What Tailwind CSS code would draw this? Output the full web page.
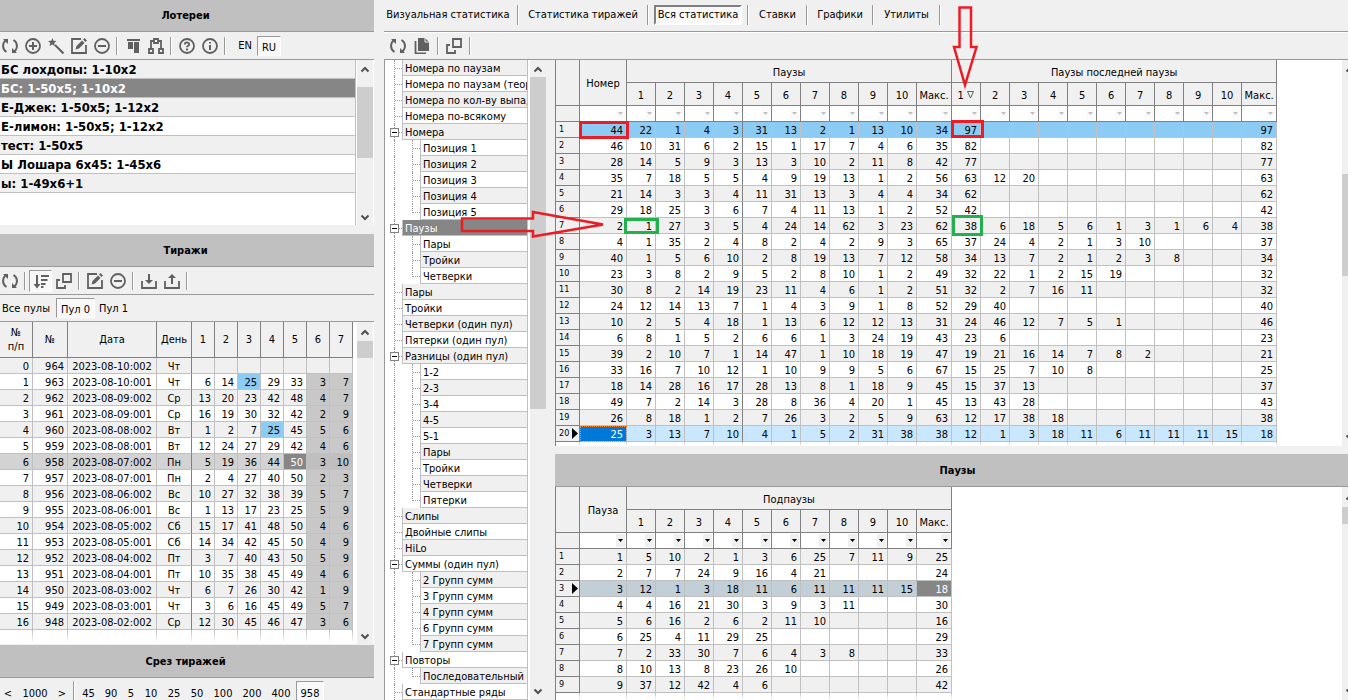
<!DOCTYPE html>
<html lang="ru">
<head>
  <meta charset="UTF-8" />
  <meta name="viewport" content="width=device-width, initial-scale=1.0" />
  <title>Статистика лотерей</title>
  <script src="https://cdn.jsdelivr.net/npm/@tailwindcss/browser@4"></script>
</head>
<body class="relative flex h-screen overflow-hidden bg-[#f0f0f0] font-['DejaVu_Sans_Condensed','Noto_Sans',sans-serif] text-[11px] leading-[15px] text-black">

  <!-- Icons -->
  <svg class="hidden" xmlns="http://www.w3.org/2000/svg">
    <symbol id="i-refresh" viewBox="0 0 16 16"><path d="M5 1.700A7 7 0 0 0 4.500 14M11 14.300A7 7 0 0 0 11.500 2" fill="none" stroke="#606060" stroke-width="2"/><path d="M1 1h5v5zM15 15h-5v-5z" fill="#606060"/></symbol>
    <symbol id="i-plus" viewBox="0 0 16 16"><circle cx="8" cy="8" r="7" fill="none" stroke="#606060" stroke-width="1.800"/><path d="M8 4v8M4 8h8" stroke="#606060" stroke-width="2"/></symbol>
    <symbol id="i-minus" viewBox="0 0 16 16"><circle cx="8" cy="8" r="7" fill="none" stroke="#606060" stroke-width="1.800"/><path d="M4 8h8" stroke="#606060" stroke-width="2"/></symbol>
    <symbol id="i-wand" viewBox="0 0 16 16"><path d="M7 7l8.500 8.500" stroke="#606060" stroke-width="2"/><path d="M4.500 0l1 2.800L8.500 3 6.200 5l.6 3-2.600-1.600L1.500 8l.8-3L0 3l3.300-.2z" fill="#606060"/></symbol>
    <symbol id="i-edit" viewBox="0 0 16 16"><path d="M10 1H1v14h14V7" fill="none" stroke="#606060" stroke-width="1.800"/><path d="M4.500 11.500l1-3.500 5.500-5.500 2.500 2.500L8 10.500zM12 1.500L13.500 0 16 2.500 14.500 4z" fill="#606060"/></symbol>
    <symbol id="i-columns" viewBox="0 0 16 16"><path d="M2 1h13v2H2zM3 4h5v7H3zM9 4h5v11H9z" fill="#606060"/></symbol>
    <symbol id="i-tree" viewBox="0 0 16 16"><g fill="none" stroke="#606060" stroke-width="1.800"><path d="M6 1h4v4H6zM1 11h4v4H1zM11 11h4v4h-4zM6 3H3v8M10 3h3v8"/></g></symbol>
    <symbol id="i-help" viewBox="0 0 16 16"><circle cx="8" cy="8" r="7" fill="none" stroke="#606060" stroke-width="1.800"/><path d="M5.800 6.500C5.800 3.700 10.300 3.900 10.200 6.300 10.200 7.800 8 7.700 8 9.300" fill="none" stroke="#606060" stroke-width="1.800"/><path d="M7 10.500h2v2H7z" fill="#606060"/></symbol>
    <symbol id="i-info" viewBox="0 0 16 16"><circle cx="8" cy="8" r="7" fill="none" stroke="#606060" stroke-width="1.800"/><path d="M7 4h2v1.600H7zM7 7h2v5H7z" fill="#606060"/></symbol>
    <symbol id="i-sort" viewBox="0 0 16 16"><path d="M3 2h2v9h2.500L4 15.500.5 11H3zM8 2h8v2H8zM8 6h6.500v2H8zM8 10h4.500v2H8zM8 13h2.500v2H8z" fill="#606060"/></symbol>
    <symbol id="i-windows" viewBox="0 0 16 16"><path d="M7 1h8v8H7z" fill="none" stroke="#606060" stroke-width="1.800"/><path d="M4 7H1v8h8v-3" fill="none" stroke="#606060" stroke-width="1.800"/></symbol>
    <symbol id="i-download" viewBox="0 0 16 16"><path d="M1 8v7h14V8" fill="none" stroke="#606060" stroke-width="1.800"/><path d="M7 1h2v6h3l-4 4-4-4h3z" fill="#606060"/></symbol>
    <symbol id="i-upload" viewBox="0 0 16 16"><path d="M1 8v7h14V8" fill="none" stroke="#606060" stroke-width="1.800"/><path d="M7 11h2V5h3L8 1 4 5h3z" fill="#606060"/></symbol>
    <symbol id="i-copy" viewBox="0 0 16 16"><path d="M4 0h7l4 4v9H4z" fill="#606060"/><path d="M11 0v4h4" fill="none" stroke="#f0f0f0"/><path d="M1.500 3v12.500H12" fill="none" stroke="#606060" stroke-width="1.800"/></symbol>
    <symbol id="i-up" viewBox="0 0 16 16"><path d="M4.500 10.500L8 7l3.500 3.500" fill="none" stroke="#505050" stroke-width="2"/></symbol>
    <symbol id="i-down" viewBox="0 0 16 16"><path d="M4.500 6.500L8 10l3.500-3.500" fill="none" stroke="#505050" stroke-width="2"/></symbol>
  </svg>

  <!-- Left column -->
  <aside class="flex w-[374px] shrink-0 flex-col">
    <h2 class="flex h-8 shrink-0 items-center justify-center border-b border-[#999] bg-[#c0c0c0] pr-[3px] font-bold">Лотереи</h2>
    <div class="-ml-0.5 flex h-7 shrink-0 items-center border-b border-[#999]" data-toolbar="refresh plus wand edit minus | columns tree | help info |">
      <button class="ml-1 h-5 w-6">EN</button>
      <button class="h-5 w-6 border border-[#999] border-r-white border-b-white bg-[#f8f8f8] pt-[3px]">RU</button>
    </div>
    <div class="flex shrink-0 border-r border-white bg-white">
      <ul id="lotteries" class="flex-1 border-r border-[#c0c0c0] pb-8 text-[13px] leading-5 font-bold"></ul>
      <div class="ml-px flex w-4 flex-col bg-[#f0f0f0]">
        <button class="flex h-[27px] items-start pt-px" aria-label="Вверх"><svg class="size-4"><use href="#i-up"/></svg></button>
        <div class="h-[71px] bg-[#cdcdcd]"></div>
        <button class="mt-auto h-4" aria-label="Вниз"><svg class="size-4"><use href="#i-down"/></svg></button>
      </div>
    </div>

    <h2 class="mt-[9px] flex h-[33px] shrink-0 items-center justify-center border-b border-[#999] bg-[#c0c0c0] pr-[3px] font-bold">Тиражи</h2>
    <div class="-ml-0.5 flex h-7 shrink-0 items-center border-b border-[#999]" data-toolbar="refresh | sort* windows | edit minus | download upload |"></div>
    <div class="flex h-[27px] shrink-0 items-center border-b border-[#999]">
      <button class="h-5 w-[52px]">Все пулы</button>
      <button class="ml-1 h-5 w-[39px] border border-[#999] border-r-white border-b-white bg-[#f8f8f8] pt-0.5">Пул 0</button>
      <button class="h-5 w-[37px]">Пул 1</button>
    </div>
    <div class="flex min-h-0 flex-1 overflow-hidden border-r border-white bg-white">
      <div class="flex-1 overflow-hidden">
        <table id="draws" class="w-[353px] table-fixed border-separate border-spacing-0"></table>
      </div>
      <div class="flex w-4 flex-col bg-[#f0f0f0]">
        <button class="h-[19px]" aria-label="Вверх"><svg class="size-4"><use href="#i-up"/></svg></button>
        <div class="h-[17px] bg-[#cdcdcd]"></div>
        <button class="mt-auto h-4" aria-label="Вниз"><svg class="size-4"><use href="#i-down"/></svg></button>
      </div>
    </div>

    <h2 class="mt-px flex h-[33px] shrink-0 items-center justify-center border-b border-[#999] bg-[#c0c0c0] pr-[3px] font-bold">Срез тиражей</h2>
    <div class="flex h-[22px] shrink-0 gap-px overflow-hidden pt-[3px]">
      <button class="h-6 w-4">&lt;</button>
      <button class="h-6 w-9">1000</button>
      <button class="h-6 w-4">&gt;</button>
      <i class="mx-0.5 h-6 w-0.5 border-l border-[#999] bg-white"></i>
      <button class="h-6 w-[21px]">45</button>
      <button class="h-6 w-[22px]">90</button>
      <button class="h-6 w-4">5</button>
      <button class="h-6 w-[22px]">10</button>
      <button class="h-6 w-[22px]">25</button>
      <button class="h-6 w-[22px]">50</button>
      <button class="h-6 w-7">100</button>
      <button class="h-6 w-7">200</button>
      <button class="h-6 w-7">400</button>
      <button class="h-6 w-7 border border-[#999] border-r-white bg-[#f8f8f8] pt-px">958</button>
    </div>
  </aside>

  <!-- Statistics -->
  <main class="ml-2.5 flex min-w-0 flex-1 flex-col">
    <nav class="flex h-8 shrink-0 items-center border-b border-[#999] pb-0.5 whitespace-nowrap">
      <button class="h-5 w-32">Визуальная статистика</button>
      <i class="mx-[5px] h-5 w-0.5 border-l border-[#999] bg-white"></i>
      <button class="h-5 w-[118px]">Статистика тиражей</button>
      <i class="mx-[5px] h-5 w-0.5 border-l border-[#999] bg-white"></i>
      <button class="h-5 w-[88px] border-2 border-[#808080] border-r-white border-b-white bg-[#f8f8f8]">Вся статистика</button>
      <i class="mx-[5px] h-5 w-0.5 border-l border-[#999] bg-white"></i>
      <button class="h-5 w-[47px]">Ставки</button>
      <i class="mx-[5px] h-5 w-0.5 border-l border-[#999] bg-white"></i>
      <button class="h-5 w-[54px]">Графики</button>
      <i class="mx-[5px] h-5 w-0.5 border-l border-[#999] bg-white"></i>
      <button class="h-5 w-[55px]">Утилиты</button>
      <i class="mx-[5px] h-5 w-0.5 border-l border-[#999] bg-white"></i>
    </nav>
    <div class="flex h-7 shrink-0 items-center border-t border-b border-t-white border-b-[#999] pl-0.5" data-toolbar="refresh copy | windows |"></div>

    <div class="flex min-h-0 flex-1">
      <div class="flex w-[162px] shrink-0 overflow-hidden border-l border-[#999] bg-white">
        <ul id="tree" class="w-[143px] overflow-hidden whitespace-nowrap"></ul>
        <div class="ml-0.5 flex w-4 flex-col bg-[#f0f0f0]">
          <button class="h-[17px]" aria-label="Вверх"><svg class="size-4"><use href="#i-up"/></svg></button>
          <div class="h-[332px] bg-[#cdcdcd]"></div>
          <button class="mt-auto h-[18px]" aria-label="Вниз"><svg class="size-4"><use href="#i-down"/></svg></button>
        </div>
      </div>

      <div class="-mr-3 ml-[9px] flex min-w-0 flex-1 flex-col">
        <div class="flex shrink-0 border-l border-[#808080] bg-white pr-0.5">
          <div class="min-w-0 flex-1">
            <table id="pauses" class="w-[721px] table-fixed border-separate border-spacing-0"></table>
          </div>
          <div class="flex w-4 flex-col bg-[#f0f0f0]">
            <button class="flex h-[114px] items-start pt-px" aria-label="Вверх"><svg class="size-4"><use href="#i-up"/></svg></button>
            <div class="h-[102px] bg-[#cdcdcd]"></div>
            <button class="mt-auto h-[18px]" aria-label="Вниз"><svg class="size-4"><use href="#i-down"/></svg></button>
          </div>
        </div>
        <h2 class="mt-2 flex h-[33px] shrink-0 items-center justify-center border-b border-[#999] bg-[#c0c0c0] font-bold">Паузы</h2>
        <div class="flex min-h-0 flex-1 overflow-hidden border-l border-[#808080] bg-white pr-0.5">
          <div class="min-w-0 flex-1">
            <table id="subpauses" class="w-[396px] table-fixed border-separate border-spacing-0"></table>
          </div>
          <div class="flex w-4 flex-col bg-[#f0f0f0]">
            <button class="h-5" aria-label="Вверх"><svg class="size-4"><use href="#i-up"/></svg></button>
            <div class="h-[17px] bg-[#cdcdcd]"></div>
            <button class="mt-auto h-[18px]" aria-label="Вниз"><svg class="size-4"><use href="#i-down"/></svg></button>
          </div>
        </div>
      </div>
    </div>
  </main>

  <!-- Marks drawn over the tables -->
  <svg class="pointer-events-none absolute top-0 left-0" width="1000" height="250" fill="none" stroke-width="3">
    <g stroke="#ed1c24">
      <rect x="580.500" y="122.500" width="47" height="15"/>
      <rect x="952.500" y="121.500" width="30" height="15"/>
      <path stroke-width="2.500" d="M462 218.500h71v-6.500l70 12.500-70 12v-5.500h-71z"/>
      <path stroke-width="2.500" d="M959.500 7.500h11.500v39.500h5.500L965 85 954 47h5.500z"/>
    </g>
    <g stroke="#22b14c">
      <rect x="625.500" y="219.500" width="32" height="13"/>
      <rect x="953.500" y="216.500" width="28" height="18"/>
    </g>
  </svg>

  <script>
    const lotteries = ['БС лохдопы: 1-10x2', 'БС: 1-50x5; 1-10x2', 'Е-Джек: 1-50x5; 1-12x2', 'Е-лимон: 1-50x5; 1-12x2', 'тест: 1-50x5', 'Ы Лошара 6x45: 1-45x6', 'ы: 1-49x6+1'];

    const draws = [
      '964 2023-08-10:002 Чт',
      '963 2023-08-10:001 Чт 6 14 25 29 33 3 7',
      '962 2023-08-09:002 Ср 13 20 23 42 48 4 7',
      '961 2023-08-09:001 Ср 16 19 30 32 42 2 9',
      '960 2023-08-08:002 Вт 1 2 7 25 45 5 6',
      '959 2023-08-08:001 Вт 12 24 27 29 42 4 6',
      '958 2023-08-07:002 Пн 5 19 36 44 50 3 10',
      '957 2023-08-07:001 Пн 2 4 27 40 50 2 3',
      '956 2023-08-06:002 Вс 10 27 32 38 39 5 7',
      '955 2023-08-06:001 Вс 1 13 17 23 25 5 9',
      '954 2023-08-05:002 Сб 15 17 41 48 50 4 6',
      '953 2023-08-05:001 Сб 14 34 42 45 50 4 9',
      '952 2023-08-04:002 Пт 3 7 40 43 50 5 9',
      '951 2023-08-04:001 Пт 10 35 38 45 49 4 6',
      '950 2023-08-03:002 Чт 6 7 26 30 42 1 9',
      '949 2023-08-03:001 Чт 3 6 16 45 49 5 7',
      '948 2023-08-02:002 Ср 12 30 45 46 47 3 6'
    ];

    // '-' child, '=' last child, '+' opened group
    const tree = ['Номера по паузам', 'Номера по паузам (теория)', 'Номера по кол-ву выпадений', 'Номера по-всякому',
      '+Номера', '-Позиция 1', '-Позиция 2', '-Позиция 3', '-Позиция 4', '=Позиция 5',
      '+Паузы', '-Пары', '-Тройки', '=Четверки',
      'Пары', 'Тройки', 'Четверки (один пул)', 'Пятерки (один пул)',
      '+Разницы (один пул)', '-1-2', '-2-3', '-3-4', '-4-5', '-5-1', '-Пары', '-Тройки', '-Четверки', '=Пятерки',
      'Слипы', 'Двойные слипы', 'HiLo',
      '+Суммы (один пул)', '-2 Групп сумм', '-3 Групп сумм', '-4 Групп сумм', '-6 Групп сумм', '=7 Групп сумм',
      '+Повторы', '=Последовательный сдвиг', 'Стандартные ряды'];

    // number, 10 pauses, max | pauses of the last pause | max
    const pauses = [
      '44 22 1 4 3 31 13 2 1 13 10 34|97|97',
      '46 10 31 6 2 15 1 17 7 4 6 35|82|82',
      '28 14 5 9 3 13 3 10 2 11 8 42|77|77',
      '35 7 18 5 5 4 9 19 13 1 2 56|63 12 20|63',
      '21 14 3 3 4 11 31 13 3 4 4 34|62|62',
      '29 18 25 3 6 7 4 11 13 1 2 52|42|42',
      '2 1 27 3 5 4 24 14 62 3 23 62|38 6 18 5 6 1 3 1 6 4|38',
      '4 1 35 2 4 8 2 4 2 9 3 65|37 24 4 2 1 3 10|37',
      '40 1 5 6 10 2 8 19 13 7 12 58|34 13 7 2 1 2 3 8|34',
      '23 3 8 2 9 5 2 8 10 1 2 49|32 22 1 2 15 19|32',
      '30 8 2 14 19 23 11 4 6 1 2 51|32 2 7 16 11|32',
      '24 12 14 13 7 1 4 3 9 1 8 52|29 40|40',
      '10 2 5 4 18 1 13 6 12 12 13 31|24 46 12 7 5 1|46',
      '6 8 1 5 2 6 6 1 3 24 19 43|23 6|23',
      '39 2 10 7 1 14 47 1 10 18 19 47|19 21 16 14 7 8 2|21',
      '33 16 7 10 12 1 10 9 9 5 6 67|15 25 7 10 8|25',
      '18 14 28 16 17 28 13 8 1 18 9 45|15 37 13|37',
      '49 7 2 14 3 28 8 36 4 20 1 45|13 43 28|43',
      '26 8 18 1 2 7 26 3 2 5 9 63|12 17 38 18|38',
      '25 3 13 7 10 4 1 5 2 31 38 38|12 1 3 18 11 6 11 11 11 15|18'
    ];

    const subpauses = [
      '1|5 10 2 1 3 6 25 7 11 9|25',
      '2|7 7 24 9 16 4 21|24',
      '3|12 1 3 18 11 6 11 11 11 15|18',
      '4|4 16 21 30 3 9 3 11|30',
      '5|6 16 2 6 2 11 10|16',
      '6|25 4 11 29 25|29',
      '7|2 33 30 7 6 4 3 8|33',
      '8|10 13 8 23 26 10|26',
      '9|37 12 42 4 6|42'
    ];

    const ten = [1, 2, 3, 4, 5, 6, 7, 8, 9, 10];
    const cols = widths => `<colgroup>${widths.map(w => `<col style="width:${w}px">`).join('')}</colgroup>`;
    const pad = arr => [...arr, ...Array(10 - arr.length).fill('')];
    const pointer = '<svg class="absolute top-0.5 right-px" width="6" height="11"><path d="M0 0l6 5.500L0 11z"/></svg>';
    const th = 'border-r border-b border-[#808080] bg-[#f0f0f0] p-0 text-center font-normal ';
    const fade = 'border-r border-[#c0c0c0] p-0 [mask-image:linear-gradient(black,transparent)] ';

    // Toolbars
    document.querySelectorAll('[data-toolbar]').forEach(bar => {
      const wide = bar.dataset.toolbar.includes('copy');
      bar.insertAdjacentHTML('afterbegin', bar.dataset.toolbar.split(' ').map(name => {
        if (name === '|') return '<i class="mx-[3px] h-[18px] w-0.5 border-l border-[#999] bg-white"></i>';
        const on = name.endsWith('*');
        const id = name.replace('*', '');
        return `<button aria-label="${id}" class="flex h-[22px] items-center justify-center ${wide ? 'w-6' : 'w-[23px]'} ${on ? 'border border-[#999] border-r-white border-b-white bg-[#f8f8f8]' : ''}"><svg class="size-4"><use href="#i-${id}"/></svg></button>`;
      }).join(''));
    });

    document.getElementById('lotteries').innerHTML = lotteries.map((name, i) => {
      const bg = i === 1 ? 'bg-[#868686] text-white' : i % 2 ? 'bg-white' : 'bg-[#f0f0f0]';
      return `<li class="h-[19px] border-b border-[#c0c0c0] pl-px ${bg}">${name}</li>`;
    }).join('');

    // Draws
    document.getElementById('draws').innerHTML = cols([33, 35, 89, 35, 23, 23, 23, 23, 23, 23, 23]) +
      `<thead><tr class="h-9">${['№<br>п/п', '№', 'Дата', 'День', 1, 2, 3, 4, 5, 6, 7].map(t => `<th class="${th} leading-[14px]">${t}</th>`).join('')}</tr></thead><tbody>` +
      draws.map((line, r) => {
        const cells = [r, ...line.split(' ')];
        while (cells.length < 11) cells.push('');
        return `<tr class="h-4 ${r === 6 ? 'bg-[#d3d3d3]' : r % 2 ? 'bg-white' : 'bg-[#f0f0f0]'}">` + cells.map((v, c) => {
          let cls = 'border-r border-b border-b-[#c0c0c0] p-0 pt-0.5 leading-[13px] ';
          cls += c === 3 ? 'border-r-[#808080] ' : 'border-r-[#c0c0c0] ';
          cls += c === 2 || c === 3 ? 'text-center ' : 'pr-[3px] text-right ';
          if (c > 8 && r > 0) cls += r === 6 ? 'bg-[#bfbfbf] ' : 'bg-[#c8c8c8] ';
          if (c > 3 && c < 9 && v === '25' && r < 5) cls += 'bg-[#8ccbf3] ';
          if (r === 6 && c === 8) cls += 'bg-[#868686] text-white ';
          return `<td class="${cls}">${v}</td>`;
        }).join('') + '</tr>';
      }).join('') + `<tr class="h-[13px]">${`<td class="${fade}"></td>`.repeat(11)}</tr></tbody>`;

    // Tree
    document.getElementById('tree').innerHTML = tree.map((item, i) => {
      const kind = '+-='.includes(item[0]) ? item[0] : '';
      const child = kind === '-' || kind === '=';
      const bg = item === '+Паузы' ? 'bg-[#868686] text-white' : i % 2 ? 'bg-white' : 'bg-[#f0f0f0]';
      const stub = '<span class="block h-[9px] border-b border-dotted border-[#999]"></span>';
      let gutter = `<span class="relative ml-[9px] h-4 w-2 shrink-0 border-l border-dotted border-[#999]">${child ? '' : stub}`;
      if (kind === '+') gutter += '<button aria-label="Свернуть" class="absolute top-1 -left-[5px] flex size-[9px] items-center border border-[#808080] bg-white px-px"><i class="h-px w-full bg-black"></i></button>';
      gutter += '</span>';
      if (kind === '-') gutter += `<span class="ml-2.5 h-4 w-2 shrink-0 border-l border-dotted border-[#999]">${stub}</span>`;
      if (kind === '=') gutter += '<span class="ml-2.5 h-[9px] w-2 shrink-0 border-b border-l border-dotted border-[#999]"></span>';
      return `<li class="flex h-4">${gutter}<span class="min-w-0 flex-1 overflow-hidden border-r border-b border-l border-[#c0c0c0] pl-0.5 leading-[18px] ${bg}">${kind ? item.slice(1) : item}</span></li>`;
    }).join('');

    // Grid head: group row, column row, filter row
    function gridHead(first, groups, active) {
      const subs = groups.map((_, g) => [...ten, 'Макс.'].map(t => {
        const mark = g === 1 && t === 1 ? ' <svg class="inline align-baseline" width="8" height="8"><path d="M.5.5h6L3.500 7z" fill="none" stroke="#606060"/></svg>' : '';
        return `<th class="${th} pt-0.5">${t}${mark}</th>`;
      }).join('')).join('');
      const filter = `<td class="border-r border-b border-[#808080] bg-white p-0"><button aria-label="Фильтр" class="mr-px ml-auto flex h-[13px] w-[9px] items-center justify-center ${active ? 'bg-[#f0f0f0]' : 'bg-[#fbfbfb]'}"><svg width="5" height="3"><path d="M0 0h5L2.500 3z" fill="${active ? '#000' : '#c0c0c0'}"/></svg></button></td>`;
      return `<thead><tr class="h-[23px]"><th rowspan="2" class="${th} pt-0.5"></th><th rowspan="2" class="${th} pt-0.5">${first}</th>` +
        groups.map(t => `<th colspan="11" class="${th} pt-0.5">${t}</th>`).join('') +
        `</tr><tr class="h-[23px]">${subs}</tr><tr class="h-4"><td class="${th}"></td>${filter.repeat(groups.length * 11 + 1)}</tr></thead>`;
    }

    function gridRow(cells, r, current, bg, cellClass) {
      return `<tr class="h-4 ${bg}"><th class="relative border-r border-b border-[#808080] bg-[#f0f0f0] p-0 pl-[3px] text-left text-[9px] font-normal">${r + 1}${current ? pointer : ''}</th>` +
        cells.map((v, c) => `<td class="border-r border-b border-b-[#c0c0c0] p-0 pt-0.5 pr-[3px] text-right leading-[13px] ${cellClass(c)}">${v}</td>`).join('') + '</tr>';
    }

    document.getElementById('pauses').innerHTML =
      cols([24, 47, ...ten.map(() => 29), 35, ...ten.map(() => 29), 35]) +
      gridHead('Номер', ['Паузы', 'Паузы последней паузы'], false) + '<tbody>' +
      pauses.map((line, r) => {
        const [a, b, max] = line.split('|');
        const cells = [...a.split(' '), ...pad(b.split(' ')), max];
        const bg = r === 0 ? 'bg-[#8ccbf3]' : r === 19 ? 'bg-[#c9e7ff]' : r % 2 ? 'bg-white' : 'bg-[#f0f0f0]';
        return gridRow(cells, r, r === 19, bg, c => {
          if (r === 19 && c === 0) return 'border-r-[#c0c0c0] bg-[#0078d7] text-white outline-1 -outline-offset-1 outline-dotted outline-[#ff8728]';
          return c === 4 ? 'border-r-[#808080]' : 'border-r-[#c0c0c0]';
        });
      }).join('') + `<tr class="h-1">${`<td class="${fade}"></td>`.repeat(24)}</tr></tbody>`;

    document.getElementById('subpauses').innerHTML =
      cols([24, 47, ...ten.map(() => 29), 35]) +
      gridHead('Пауза', ['Подпаузы'], true) + '<tbody>' +
      subpauses.map((line, r) => {
        const [n, b, max] = line.split('|');
        const bg = r === 2 ? 'bg-[#c3cfd7]' : r % 2 ? 'bg-white' : 'bg-[#f0f0f0]';
        return gridRow([n, ...pad(b.split(' ')), max], r, r === 2, bg,
          c => r === 2 && c === 11 ? 'border-r-[#c0c0c0] bg-[#868686] text-white' : 'border-r-[#c0c0c0]');
      }).join('') + `<tr class="h-[7px]">${`<td class="${fade}"></td>`.repeat(13)}</tr></tbody>`;
  </script>
</body>
</html>
